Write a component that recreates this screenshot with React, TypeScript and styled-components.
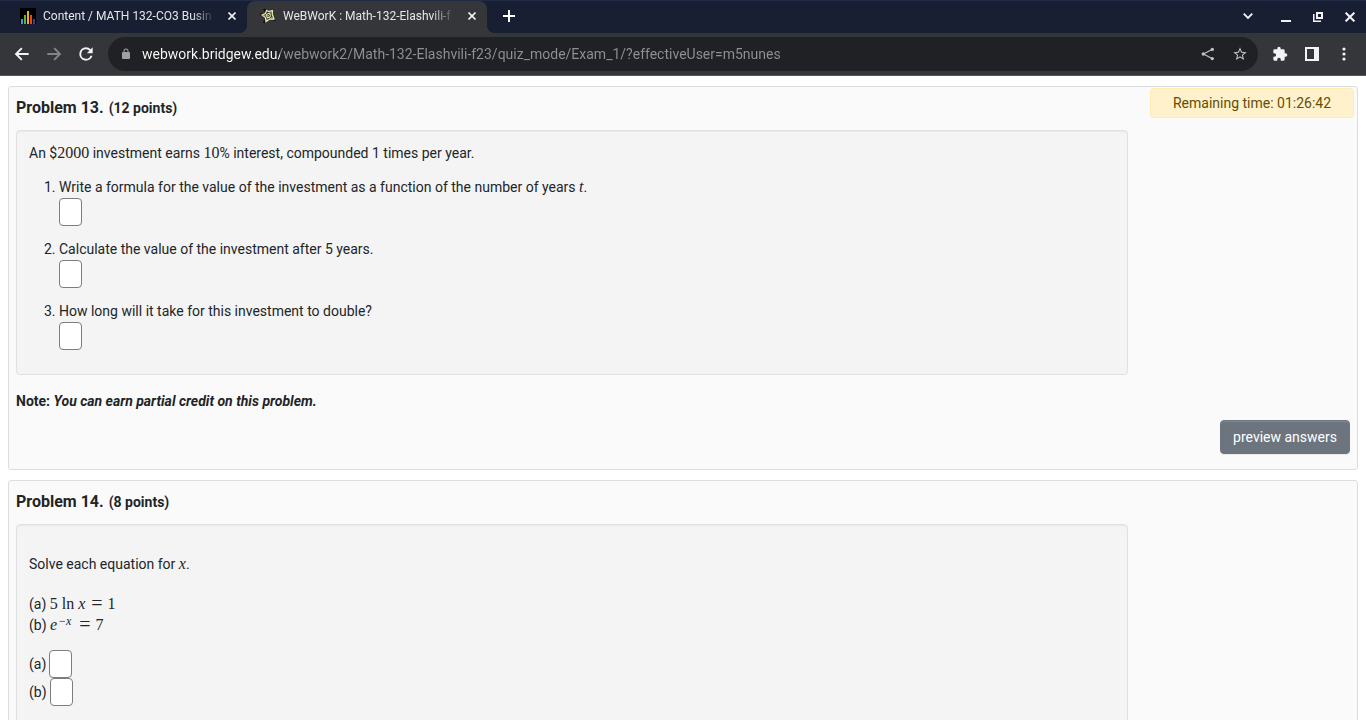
import React from 'react';
import styled, { createGlobalStyle, css } from 'styled-components';

const GlobalStyle = createGlobalStyle`
  *, *::before, *::after { box-sizing: border-box; }
  body {
    margin: 0;
    background: #fff;
    color: #212529;
    font-family: Roboto, "Liberation Sans", sans-serif;
    font-size: 14px;
    line-height: 21px;
    overflow: hidden;
  }
  button, input { font: inherit; }
`;

/* ---------- Browser frame ---------- */

const TabStrip = styled.header`
  display: flex;
  align-items: stretch;
  height: 33px;
  padding-left: 7px;
  background: #191f33;
  border-top: 1px solid #222b45;
`;

const footCurve = css`
  content: "";
  position: absolute;
  bottom: 0;
  width: 8px;
  height: 8px;
`;

const Tab = styled.div<{ $active?: boolean }>`
  position: relative;
  display: flex;
  align-items: center;
  flex: 0 1 240px;
  min-width: 0;
  padding: 0 7px 2px 13px;
  color: #e4e6ea;
  font-size: 12px;
  line-height: 16px;
  ${(p) =>
    p.$active &&
    css`
      background: #35363a;
      border-radius: 8px 8px 0 0;
      &::before {
        ${footCurve}
        left: -8px;
        background: radial-gradient(circle at 0 0, transparent 8px, #35363a 8px);
      }
      &::after {
        ${footCurve}
        right: -8px;
        background: radial-gradient(circle at 100% 0, transparent 8px, #35363a 8px);
      }
    `}
`;

const TabTitle = styled.span`
  flex: 1;
  min-width: 0;
  margin: 0 8px 0 7px;
  overflow: hidden;
  white-space: nowrap;
  mask-image: linear-gradient(90deg, #000 calc(100% - 24px), transparent calc(100% - 1px));
`;

const IconButton = styled.button<{ $size?: number; $color?: string }>`
  display: flex;
  flex: none;
  align-items: center;
  justify-content: center;
  width: ${(p) => p.$size ?? 32}px;
  height: ${(p) => p.$size ?? 32}px;
  padding: 0;
  border: 0;
  background: none;
  color: ${(p) => p.$color ?? '#f1f3f4'};
`;

const NewTab = styled(IconButton)`
  margin-left: 8px;
  height: 30px;
`;

const WindowControls = styled.div`
  display: flex;
  margin-left: auto;
  height: 32px;
`;

const TabSearch = styled(IconButton)`
  margin-right: 6px;
  height: 30px;
`;

const Toolbar = styled.nav`
  display: flex;
  align-items: center;
  height: 43px;
  padding: 0 6px;
  background: #35363a;
  border-bottom: 1px solid #5b555f;
`;

const AddressBar = styled.div`
  display: flex;
  flex: 1;
  align-items: center;
  height: 34px;
  margin: 0 6px;
  padding: 0 2px 0 10px;
  border-radius: 17px;
  background: #202124;
`;

const AddressInput = styled.input`
  flex: 1;
  min-width: 0;
  height: 24px;
  margin-left: 8px;
  padding: 0;
  border: 0;
  outline: 0;
  color: #9aa0a6;
  background: linear-gradient(90deg, #fff 138px, #8f9195 138px);
  background-clip: text;
  -webkit-background-clip: text;
  -webkit-text-fill-color: transparent;
`;

/* ---------- Problem page ---------- */

const Page = styled.main`
  position: relative;
  display: flex;
  flex-direction: column;
  gap: 10px;
  padding: 10px 8px;
`;

const Timer = styled.div`
  position: absolute;
  top: 12px;
  right: 12px;
  width: 204px;
  padding: 4px 0 3px;
  border: 1px solid #ffecb5;
  border-radius: 4px;
  background: #fff1cc;
  color: #664d03;
  text-align: center;
`;

const ProblemCard = styled.section`
  padding: 9px 7px 15px;
  border: 1px solid #dcdddd;
  border-radius: 3px;
  background: #fafafa;
`;

const ProblemTitle = styled.h2`
  margin: 0 0 10px;
  font-size: 16px;
  font-weight: 700;
  line-height: 24px;
`;

const Points = styled.span`
  margin-left: 1px;
  font-size: 14px;
`;

const ProblemBody = styled.div`
  width: 83.333%;
  padding: 12px;
  border: 1px solid #e1e1e1;
  border-radius: 4px;
  background: #f4f4f4;
  box-shadow: inset 0 1px 1px rgba(0, 0, 0, 0.05);
`;

const Paragraph = styled.p`
  margin: 0 0 13px;
`;

const Questions = styled.ol`
  display: flex;
  flex-direction: column;
  gap: 13px;
  margin: 0;
  padding: 0 0 12px 30px;
`;

const AnswerInput = styled.input`
  display: block;
  width: 23px;
  height: 28px;
  padding: 2px 4px;
  border: 1px solid #7d7d7d;
  border-radius: 4px;
  background: #fff;
`;

const Note = styled.p`
  margin: 16px 0 8px;
  font-weight: 700;
`;

const ButtonRow = styled.div`
  display: flex;
  justify-content: flex-end;
`;

const PreviewButton = styled.button`
  height: 34px;
  padding: 0 12px;
  border: 1px solid #6c757d;
  border-radius: 4px;
  background: #6c757d;
  box-shadow: inset 0 1px 0 rgba(255, 255, 255, 0.15), 0 1px 1px rgba(0, 0, 0, 0.075);
  color: #fff;
`;

const Spaced = styled.div`
  padding: 17px 0 14px;
`;

const Line = styled.div`
  line-height: 21px;
`;

const Equations = styled.div`
  margin: 19px 0 14px;
`;

const AnswerLine = styled.label`
  display: flex;
  align-items: center;
  gap: 3px;
`;

const MathText = styled.span`
  font-family: "Liberation Serif", serif;
  font-size: 16px;
  line-height: 16px;
  white-space: nowrap;
  i { font-style: italic; }
  sup { margin: 0 2px; font-size: 12px; line-height: 0; vertical-align: 5px; }
`;

const Operator = styled.span`
  margin: 0 5px 0 6px;
  font-size: 20px;
  line-height: 16px;
  vertical-align: -1px;
`;

/* ---------- Icons ---------- */

type GlyphProps = { d: string; size?: number };
const Glyph = ({ d, size = 18 }: GlyphProps) => (
  <svg width={size} height={size} viewBox="0 0 24 24" fill="currentColor" aria-hidden="true">
    <path d={d} />
  </svg>
);

const paths = {
  back: 'M22 10.500H6.600l6.200-6.200L10.700 2.200 1 12l9.700 9.800 2.100-2.100-6.200-6.200H22z',
  forward: 'M2 10.500h15.400l-6.200-6.200 2.100-2.100L23 12l-9.700 9.800-2.100-2.100 6.200-6.200H2z',
  reload:
    'M17.65 6.35A7.96 7.96 0 0 0 12 4a8 8 0 1 0 7.73 10h-2.400A5.700 5.700 0 1 1 12 6.300c1.600 0 3 .65 4 1.700L13 11h7V4z',
  lock: 'M18 8h-1V6A5 5 0 0 0 7 6v2H6a2 2 0 0 0-2 2v10a2 2 0 0 0 2 2h12a2 2 0 0 0 2-2V10a2 2 0 0 0-2-2zM9 6a3 3 0 0 1 6 0v2H9z',
  star: 'M22 9.24l-7.190-.62L12 2 9.190 8.630 2 9.240l5.460 4.730L5.820 21 12 17.270 18.180 21l-1.630-7.030zM12 15.400l-3.760 2.270 1-4.280-3.320-2.880 4.380-.38L12 6.100l1.710 4.040 4.380.38-3.320 2.880 1 4.280z',
  puzzle:
    'M20.500 11H19V7a2 2 0 0 0-2-2h-4V3.500a2.500 2.500 0 0 0-5 0V5H4a2 2 0 0 0-2 2v3.800h1.500a2.700 2.700 0 0 1 0 5.400H2V20a2 2 0 0 0 2 2h3.800v-1.500a2.700 2.700 0 0 1 5.400 0V22H17a2 2 0 0 0 2-2v-4h1.500a2.500 2.500 0 0 0 0-5z',
};

const CloseIcon = ({ size = 8 }: { size?: number }) => (
  <svg width={size} height={size} viewBox="0 0 8 8" stroke="currentColor" strokeWidth="1.6" aria-hidden="true">
    <path d="M.5 .5l7 7M7.500 .5l-7 7" />
  </svg>
);

const PlusIcon = () => (
  <svg width="12" height="12" viewBox="0 0 12 12" fill="currentColor" aria-hidden="true">
    <path d="M5 0h2v5h5v2H7v5H5V7H0V5h5z" />
  </svg>
);

const ChevronIcon = () => (
  <svg width="10" height="6" viewBox="0 0 10 6" fill="none" stroke="currentColor" strokeWidth="1.8" aria-hidden="true">
    <path d="M.7 .7L5 5 9.300 .7" />
  </svg>
);

const MinimizeIcon = () => (
  <svg width="10" height="10" viewBox="0 0 10 10" fill="currentColor" aria-hidden="true">
    <path d="M0 8h10v2H0z" />
  </svg>
);

const RestoreIcon = () => (
  <svg width="10" height="10" viewBox="0 0 10 10" fill="currentColor" fillRule="evenodd" aria-hidden="true">
    <path d="M3 0h7v7H3zM5 2v3h3V2z" />
    <path d="M0 2h1.500v6.500H8V10H0z" />
  </svg>
);

const ShareIcon = () => (
  <svg width="14" height="14" viewBox="0 0 14 14" fill="currentColor" aria-hidden="true">
    <path d="M11 2.500L2.500 7l8.500 4.500" fill="none" stroke="currentColor" strokeWidth="1.200" />
    <circle cx="11.300" cy="2.400" r="1.700" />
    <circle cx="2.300" cy="7" r="1.700" />
    <circle cx="11.300" cy="11.600" r="1.700" />
  </svg>
);

const SidePanelIcon = () => (
  <svg width="14" height="14" viewBox="0 0 14 14" fill="currentColor" fillRule="evenodd" aria-hidden="true">
    <path d="M0 0h14v14H0zM2 2v10h7V2z" />
  </svg>
);

const MenuIcon = () => (
  <svg width="4" height="14" viewBox="0 0 4 14" fill="currentColor" aria-hidden="true">
    <circle cx="2" cy="2" r="1.600" />
    <circle cx="2" cy="7" r="1.600" />
    <circle cx="2" cy="12" r="1.600" />
  </svg>
);

const BarsFavicon = () => (
  <svg width="16" height="16" viewBox="0 0 16 16" aria-hidden="true">
    <path d="M0 0h16v16H0z" fill="#000" />
    <path d="M1 11h2v5H1z" fill="#22a7f0" />
    <path d="M4 7h2v9H4z" fill="#5cb531" />
    <path d="M7 3h2v13H7z" fill="#f5b400" />
    <path d="M10 7h2v9h-2z" fill="#e8442a" />
    <path d="M13 11h2v5h-2z" fill="#6b2c91" />
  </svg>
);

const WebFavicon = () => (
  <svg width="16" height="16" viewBox="0 0 16 16" fill="none" aria-hidden="true">
    <path d="M0 6.500h3M4 1l2 3M13 1l-1 2.500M13 10l2 3M4 15l1-3" stroke="#0c0c08" strokeWidth="2" />
    <path
      d="M2 7l3.500-1.500L6.500 2.500l2.500 1 3.500-1-.3 3.700L14 11l-4-.2L6 13.500l-.5-4z"
      fill="#34342a"
      stroke="#e9e9ae"
      strokeWidth="1.300"
    />
    <path d="M6.500 6.500L9.500 5l1 2.500-1 2-2.500 0z" stroke="#f4f4c0" />
    <path d="M2 7l6.500 .5L12.500 2.500M8.500 7.500L14 11M8.500 7.500L6 13.500" stroke="#cfcf96" strokeWidth=".6" />
  </svg>
);

/* ---------- Page content ---------- */

const questions: { id: string; text: React.ReactNode }[] = [
  {
    id: 'formula',
    text: (
      <>
        Write a formula for the value of the investment as a function of the number of years{' '}
        <MathText><i>t</i></MathText>.
      </>
    ),
  },
  { id: 'value', text: 'Calculate the value of the investment after 5 years.' },
  { id: 'double', text: 'How long will it take for this investment to double?' },
];

const BrowserFrame = () => (
  <>
    <TabStrip>
      <Tab>
        <BarsFavicon />
        <TabTitle>Content / MATH 132-CO3 Busin</TabTitle>
        <IconButton $size={16} aria-label="Close tab"><CloseIcon /></IconButton>
      </Tab>
      <Tab $active>
        <WebFavicon />
        <TabTitle>WeBWorK : Math-132-Elashvili-f</TabTitle>
        <IconButton $size={16} aria-label="Close tab"><CloseIcon /></IconButton>
      </Tab>
      <NewTab $size={28} $color="#fff" aria-label="New tab"><PlusIcon /></NewTab>
      <WindowControls>
        <TabSearch aria-label="Search tabs"><ChevronIcon /></TabSearch>
        <IconButton aria-label="Minimize"><MinimizeIcon /></IconButton>
        <IconButton aria-label="Restore"><RestoreIcon /></IconButton>
        <IconButton aria-label="Close window"><CloseIcon size={10} /></IconButton>
      </WindowControls>
    </TabStrip>
    <Toolbar>
      <IconButton aria-label="Back"><Glyph d={paths.back} size={16} /></IconButton>
      <IconButton $color="#828387" aria-label="Forward"><Glyph d={paths.forward} size={16} /></IconButton>
      <IconButton aria-label="Reload"><Glyph d={paths.reload} size={20} /></IconButton>
      <AddressBar>
        <IconButton $size={16} $color="#9aa0a6" aria-label="Site information">
          <Glyph d={paths.lock} size={12} />
        </IconButton>
        <AddressInput
          aria-label="Address"
          spellCheck={false}
          defaultValue="webwork.bridgew.edu/webwork2/Math-132-Elashvili-f23/quiz_mode/Exam_1/?effectiveUser=m5nunes"
        />
        <IconButton $color="#bdc1c6" aria-label="Share"><ShareIcon /></IconButton>
        <IconButton $color="#bdc1c6" aria-label="Bookmark"><Glyph d={paths.star} size={16} /></IconButton>
      </AddressBar>
      <IconButton aria-label="Extensions"><Glyph d={paths.puzzle} size={16} /></IconButton>
      <IconButton aria-label="Side panel"><SidePanelIcon /></IconButton>
      <IconButton aria-label="Menu"><MenuIcon /></IconButton>
    </Toolbar>
  </>
);

export default function App() {
  return (
    <>
      <GlobalStyle />
      <BrowserFrame />
      <Page>
        <ProblemCard>
          <ProblemTitle>
            Problem 13. <Points>(12 points)</Points>
          </ProblemTitle>
          <ProblemBody>
            <Paragraph>
              An $<MathText>2000</MathText> investment earns <MathText>10</MathText>% interest, compounded 1 times per
              year.
            </Paragraph>
            <Questions>
              {questions.map((q) => (
                <li key={q.id}>
                  <label htmlFor={q.id}>{q.text}</label>
                  <AnswerInput id={q.id} type="text" />
                </li>
              ))}
            </Questions>
          </ProblemBody>
          <Note>
            Note: <em>You can earn partial credit on this problem.</em>
          </Note>
          <ButtonRow>
            <PreviewButton type="button">preview answers</PreviewButton>
          </ButtonRow>
        </ProblemCard>
        <ProblemCard>
          <ProblemTitle>
            Problem 14. <Points>(8 points)</Points>
          </ProblemTitle>
          <ProblemBody>
            <Spaced>
              <Line>
                Solve each equation for <MathText><i>x</i></MathText>.
              </Line>
              <Equations>
                <Line>
                  (a) <MathText>5 ln <i>x</i><Operator>=</Operator>1</MathText>
                </Line>
                <Line>
                  (b) <MathText><i>e</i><sup>−<i>x</i></sup><Operator>=</Operator>7</MathText>
                </Line>
              </Equations>
              <AnswerLine>
                (a) <AnswerInput type="text" />
              </AnswerLine>
              <AnswerLine>
                (b) <AnswerInput type="text" />
              </AnswerLine>
            </Spaced>
          </ProblemBody>
        </ProblemCard>
        <Timer role="timer">Remaining time: 01:26:42</Timer>
      </Page>
    </>
  );
}
